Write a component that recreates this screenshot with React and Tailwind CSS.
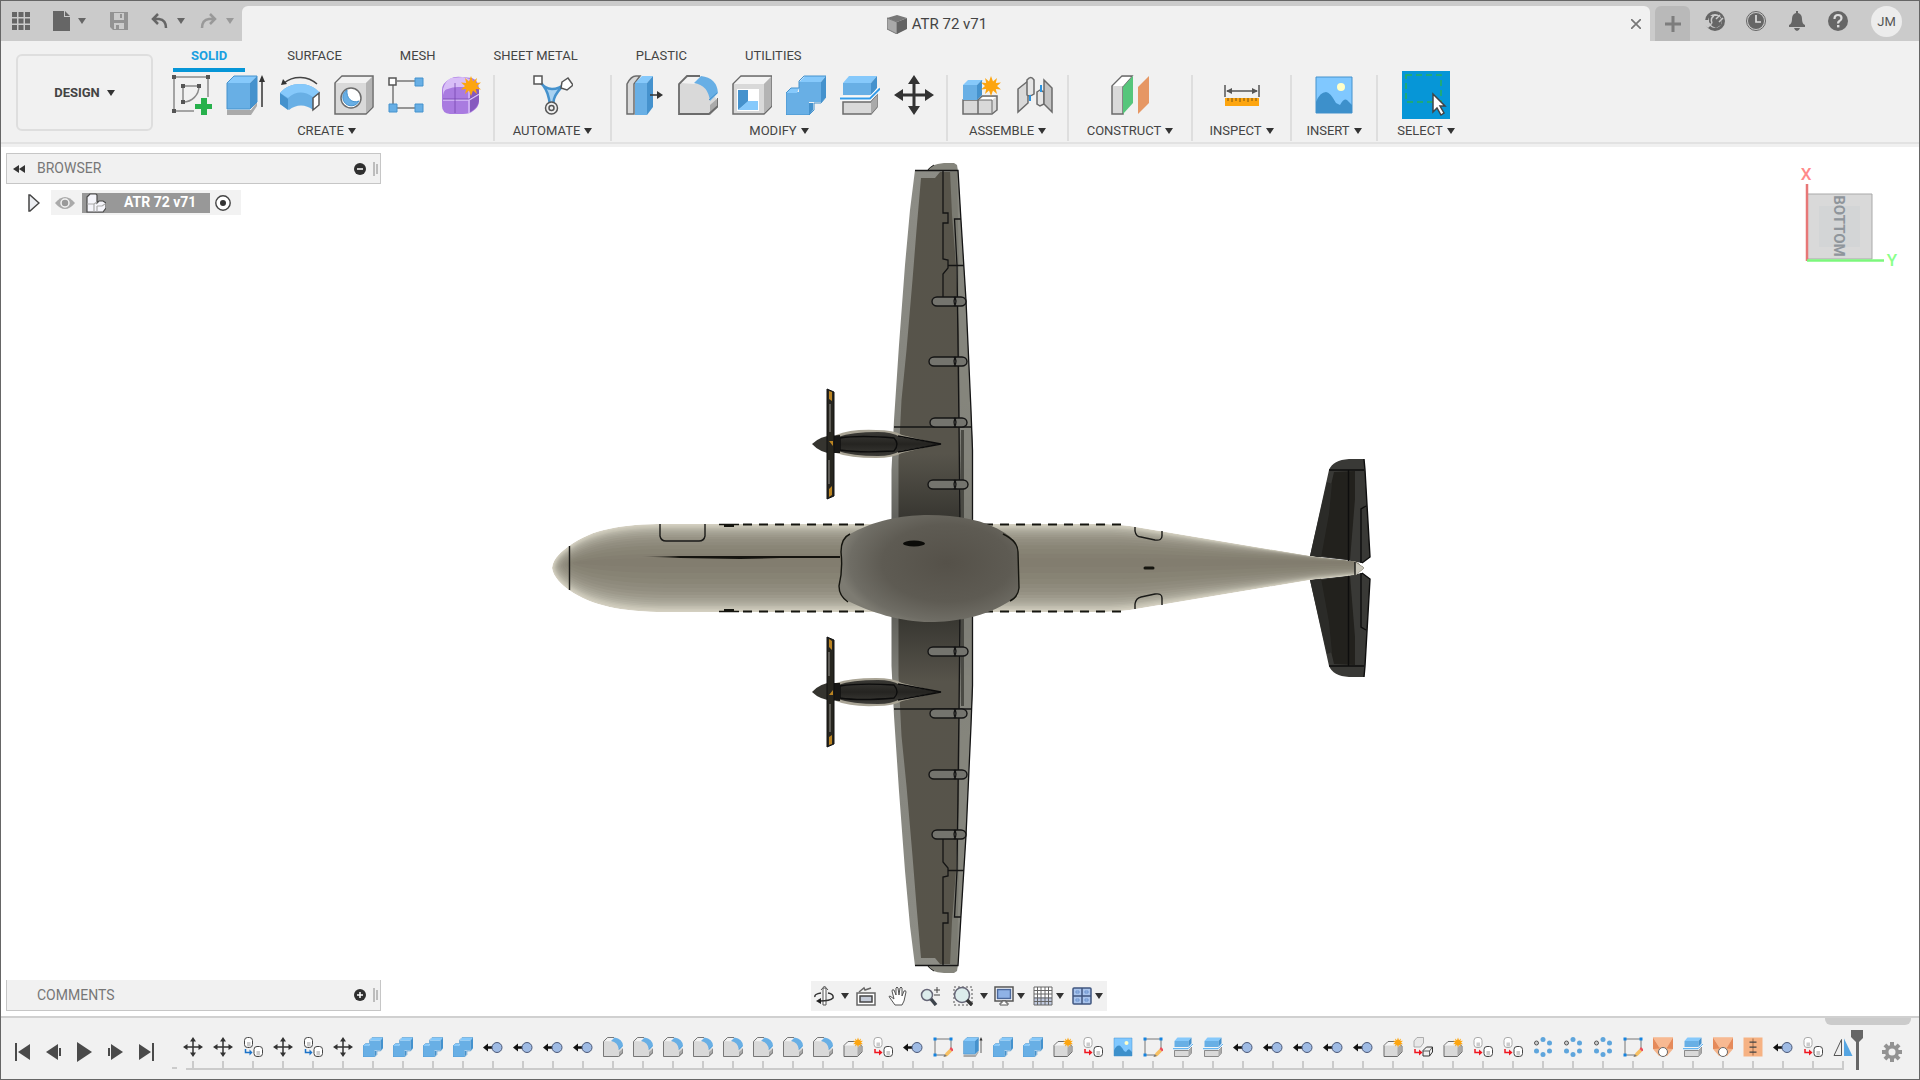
import { useState } from "react";

const BLUE = "#68afe5";
const BLUE_TOP = "#86c9fb";
const BLUE_SIDE = "#4592cd";
const GREY = "#d9d9d9";
const LINE = "#6b6b6b";

function Svg({ box = 40, size = "size-10", children }) {
  return (
    <svg viewBox={`0 0 ${box} ${box}`} className={`${size} shrink-0`} fill="none" aria-hidden="true">
      {children}
    </svg>
  );
}

function Caret({ className = "fill-[#333]" }) {
  return (
    <svg viewBox="0 0 8 6" className={`h-[6px] w-2 shrink-0 ${className}`} aria-hidden="true">
      <path d="M0 0h8L4 6z" />
    </svg>
  );
}

const STAR =
  "M0-10 2-4.6 6-8 4.8-3 10-3.6 6 0 10 3.6 4.8 3 6 8 2 4.6 0 10-2 4.6-6 8-4.8 3-10 3.6-6 0-10-3.6-4.8-3-6-8-2-4.6z";

/* ---------- 40px drawings, shared by the ribbon and the timeline ---------- */

const art = {
  sketch: (
    <>
      <path d="M2 2h34v20M2 2v34h20" stroke="#8a8a8a" strokeWidth="1.5" />
      <path d="M11 11h16c0 9-7 16-16 16z" stroke="#8a8a8a" strokeWidth="1.5" />
      <g fill="#555">
        <path d="M0 0h4v4H0zM34 0h4v4h-4zM0 34h4v4H0zM9 9h4v4H9zM25 9h4v4h-4zM9 25h4v4H9z" />
      </g>
      <path d="M29 23h6v6h6v5h-6v6h-6v-6h-6v-5h6z" fill="#27b14c" />
    </>
  ),
  extrude: (
    <>
      <path d="M1 35h24l6-8v4l-6 9H1z" fill="#aaa" />
      <path d="M1 8h23v26H1z" fill={BLUE} />
      <path d="M1 8 8 1h23l-7 7z" fill={BLUE_TOP} />
      <path d="m24 8 7-7v26l-7 7z" fill={BLUE_SIDE} />
      <path d="M1 8 8 1h23v26l-7 7H1z" stroke={BLUE_SIDE} />
      <path d="M36 6v26" stroke="#333" strokeWidth="1.5" />
      <path d="m36 0 3 7h-6z" fill="#333" />
    </>
  ),
  revolve: (
    <>
      <path d="M4 8C14 0 28 1 37 9" stroke="#444" strokeWidth="1.5" />
      <path d="M1 10 3 4l4 5z" fill="#333" />
      <path d="M0 18C10 6 30 6 40 18l-7 5v12c-7-6-17-6-24 0L0 29z" fill={BLUE} />
      <path d="M0 18C10 6 30 6 40 18l-7 4C24 16 16 16 8 23z" fill={BLUE_TOP} />
      <path d="m0 18 8 6v11l-8-6z" fill={BLUE_SIDE} />
      <path d="m33 23 6-5v12l-6 5z" fill="#fff" stroke="#555" strokeWidth="1.5" />
    </>
  ),
  hole: (
    <>
      <path d="M1 8 8 1h31v31l-7 7H1z" fill={GREY} stroke={LINE} strokeWidth="1.5" />
      <path d="m2 8 6-6h30l-6 6z" fill="#f2f2f2" />
      <path d="m32 8 6-6v30l-6 6z" fill="#b4b4b4" />
      <circle cx="17" cy="23" r="10" fill="#fff" stroke={LINE} strokeWidth="1.5" />
      <path d="M13 15a8.5 8.5 0 1 0 12 11c-7 3-13-3-12-11z" fill={BLUE} stroke={BLUE_SIDE} />
    </>
  ),
  pattern: (
    <>
      <path d="M9 6h18M5 10v19M9 33h18" stroke="#777" strokeWidth="1.5" />
      <path d="M1 3h7v7H1z" fill="#fff" stroke="#555" strokeWidth="1.5" />
      <path d="M27 3h8v8h-8zM1 29h8v8H1zM27 29h8v8h-8z" fill={BLUE} stroke={BLUE_SIDE} />
    </>
  ),
  form: (
    <>
      <path d="M8 4Q12 1 20 2l10 1q7 3 7 11v12q0 6-6 10-3 3-10 3H8q-8-1-8-8V15Q0 8 8 4z" fill="#a97be0" />
      <path d="M1 14Q3 6 9 3l12-1 10 3-7 7H9q-6 0-8 8z" fill="#d8bef7" />
      <path d="M28 13q8-3 9 1v12q-1 7-9 11z" fill="#8659bf" />
      <path d="M1 25h26l10-6M27 12v26M3 14q12-5 24-2" stroke="#d8bef7" strokeWidth="1.5" />
      <path d="M1 24h26l10-6M13 8v30" stroke="#7648b0" strokeWidth=".8" />
      <path d={STAR} transform="translate(29 11)" fill="#fda50f" />
    </>
  ),
  automate: (
    <>
      <path d="M6 6q6 8 13 8t13-5q-9 8-11 15l-1 6h-3l-1-6Q14 13 6 6z" fill="#a8d2f2" stroke={BLUE_SIDE} strokeWidth="2.5" />
      <path d="M1 1h8v8H1z" fill="#fff" stroke="#555" strokeWidth="1.5" />
      <path d="m29 7 6-4 5 7-6 5-6-2z" fill="#fff" stroke="#555" strokeWidth="1.5" />
      <circle cx="18.5" cy="33" r="6" fill="#eee" stroke="#555" strokeWidth="1.5" />
      <circle cx="18.5" cy="33" r="2.5" stroke="#555" strokeWidth="1.5" />
    </>
  ),
  press: (
    <>
      <path d="M3 9q4-8 9-8h4L10 9v30H3z" fill={GREY} stroke={LINE} strokeWidth="1.5" />
      <path d="M11 8h12v32H11z" fill={BLUE} />
      <path d="m11 8 7-7h11l-6 7z" fill={BLUE_TOP} />
      <path d="m23 8 6-7v31l-6 8z" fill={BLUE_SIDE} />
      <path d="M26 20h8" stroke="#333" strokeWidth="1.5" />
      <path d="m33 16 6 4-6 4z" fill="#333" />
    </>
  ),
  fillet: (
    <>
      <path d="M1 8 9 1h11l20 25v6l-8 8H1z" fill={GREY} />
      <path d="m2 8 8-6h13l-6 7z" fill="#f2f2f2" />
      <path d="m32 30 8-7v9l-8 8z" fill="#aaa" />
      <path d="M22 1H9L1 9v30h30l9-8v-8" stroke={LINE} strokeWidth="1.8" />
      <path d="m16 8 7-7q16 2 17 17l-8 8Q30 10 16 8z" fill={BLUE} />
      <path d="m31 25 8-7" stroke={BLUE_SIDE} />
    </>
  ),
  shell: (
    <>
      <path d="M1 9 9 1h31v30l-8 8H1z" fill={GREY} stroke={LINE} strokeWidth="1.5" />
      <path d="m2 9 7-7h30l-7 7z" fill="#f4f4f4" />
      <path d="m32 9 7-7v29l-7 7z" fill="#b4b4b4" />
      <path d="M5 14h22v22H5z" fill="#fff" />
      <path d="M6 15h10v12L6 35z" fill={BLUE_SIDE} />
      <path d="M16 26h10v9H6z" fill={BLUE_TOP} />
    </>
  ),
  combine: (
    <>
      <path d="M0 17h13V7h22v20H23v13H0z" fill={BLUE} />
      <path d="m0 18 5-5h8l-2 5zM13 7l6-6h21l-5 6z" fill={BLUE_TOP} />
      <path d="m35 7 5-6v21l-5 6zM23 28h4v7l-4 5z" fill={BLUE_SIDE} />
      <path d="m0 18 5-5h8V6l5-5h22v21l-5 6h-7v7l-5 5H0z" stroke={BLUE_SIDE} />
    </>
  ),
  split: (
    <>
      <path d="M3 27h28l6-7v12l-6 7H3z" fill={GREY} stroke={LINE} strokeWidth="1.5" />
      <path d="m31 27 6-7v12l-6 7z" fill="#aaa" />
      <path d="M3 8h28v12H3z" fill={BLUE} />
      <path d="m3 8 6-7h28l-6 7z" fill={BLUE_TOP} />
      <path d="m31 8 6-7v12l-6 8z" fill={BLUE_SIDE} />
      <path d="M0 23.500h30l10-10" stroke="#fff" strokeWidth="4" />
      <path d="M0 23.500h30l10-10" stroke="#349be8" strokeWidth="2" />
    </>
  ),
  move: (
    <>
      <path d="M20 6v28M6 20h28" stroke="#333" strokeWidth="3" />
      <path d="m20 0 6 9H14zM20 40l6-9H14zM0 20l9-6v12zM40 20l-9-6v12z" fill="#333" />
    </>
  ),
  component: (
    <>
      <path d="M2 25h15v14H2zM17 25l4-4h15v14l-5 4H17z" fill={GREY} stroke={LINE} strokeWidth="1.5" />
      <path d="m18 25 4-3h13l-4 3z" fill="#fff" />
      <path d="M31 25v13M17 25h14" stroke={LINE} />
      <path d="M2 10h14v15H2z" fill={BLUE} />
      <path d="m2 10 5-5h15l-6 5z" fill={BLUE_TOP} />
      <path d="m16 10 5-5v15l-5 5z" fill={BLUE_SIDE} />
      <path d={STAR} transform="translate(30 11)" fill="#fda50f" />
    </>
  ),
  joint: (
    <>
      <path d="M3 14 13 6v22L3 37z" fill={GREY} stroke={LINE} strokeWidth="1.5" />
      <path d="M12 5q4-5 7 0v14q-4 3-7 1z" fill="#e6e6e6" stroke={LINE} strokeWidth="1.5" />
      <path d="m22 17 3-2 4 2v12l-4 2-3-2z" fill="#e6e6e6" stroke={LINE} strokeWidth="1.5" />
      <path d="m29 5 8 8v24l-8-8z" fill="#c4c4c4" stroke={LINE} strokeWidth="1.5" />
      <path d="M15 20v6M26 10v7" stroke="#2b93e0" strokeWidth="2" />
    </>
  ),
  plane: (
    <>
      <path d="M2 11 12 1h10L13 12v27H2z" fill={GREY} stroke={LINE} strokeWidth="1.5" />
      <path d="m3 11 9-9h9l-8 9z" fill="#fff" />
      <path d="m13 12 10-11v27L13 39z" fill="#56c67b" />
      <path d="m28 12 11-11v27L28 39z" fill="#e69764" />
    </>
  ),
  measure: (
    <>
      <path d="M3 10v12M37 10v12M5 16h30" stroke="#555" strokeWidth="1.5" />
      <path d="m4 16 6-3v6zM36 16l-6-3v6z" fill="#555" />
      <path d="M3 23h34v8H3z" fill="#fda50f" />
      <path d="M6 23v3m4-3v4m4-4v3m4-3v4m4-4v3m4-3v4m4-4v3m4-3v3" stroke="#7a5410" />
    </>
  ),
  picture: (
    <>
      <path d="M2 2h36v36H2z" fill="#80c8ff" stroke={BLUE_SIDE} />
      <circle cx="27" cy="12" r="4" fill="#ffffc8" />
      <path d="M2 27q4-10 10-10 4 0 10 11l4 2q4-7 7-5l5 5v8H2z" fill="#3d90cb" />
    </>
  ),
  /* timeline only */
  link: (
    <>
      <rect x="3" y="1" width="16" height="20" rx="6" fill="#fff" stroke="#444" strokeWidth="2" />
      <rect x="22" y="19" width="17" height="20" rx="6" fill="#fff" stroke="#444" strokeWidth="2" />
      <path d="M8 10h7v9H8zM27 28h7v9h-7z" fill="#ccc" />
      <path d="M5 24v7h9" stroke="#1b72c8" strokeWidth="3" />
      <path d="m13 25 6 6-6 6z" fill="#1b72c8" />
    </>
  ),
  linkRed: (
    <>
      <rect x="2" y="1" width="16" height="20" rx="6" fill="#fff" stroke="#aaa" strokeWidth="2" />
      <rect x="22" y="19" width="17" height="20" rx="6" fill="#fff" stroke="#444" strokeWidth="2" />
      <path d="M7 11h7v8H7zM27 28h7v9h-7z" fill="#ccc" />
      <path d="M4 24v7h9" stroke="#f0141e" strokeWidth="3" />
      <path d="m12 25 7 6-7 6z" fill="#f0141e" />
    </>
  ),
  cubesRed: (
    <>
      <path d="m2 8 6-7h13v11l-6 8H2z" fill="#e8e8e8" stroke="#999" strokeWidth="1.5" />
      <path d="m20 27 7-7h12v10l-6 8H20z" fill="#eee" stroke="#333" strokeWidth="2" />
      <path d="M20 28h13v10M33 28l6-8" stroke="#333" strokeWidth="1.5" />
      <path d="M4 24v7h9" stroke="#f0141e" strokeWidth="3" />
      <path d="m12 25 7 6-7 6z" fill="#f0141e" />
    </>
  ),
  snap: (
    <>
      <path d="M6 21h15" stroke="#111" strokeWidth="5" />
      <path d="m0 21 10-8v16z" fill="#111" />
      <circle cx="28" cy="21" r="10" fill="#9fbbe4" stroke="#4a5878" strokeWidth="2" />
    </>
  ),
  newPart: (
    <>
      <path d="m2 17 8-8h14l14 9v12l-9 9H2z" fill={GREY} stroke={LINE} strokeWidth="2" />
      <path d="m3 17 8-7h15l-3 7z" fill="#f5f5f5" />
      <path d="m29 21 8-7v16l-8 8z" fill="#aaa" />
      <path d={STAR} transform="translate(30 11)" fill="#fda50f" />
    </>
  ),
  sketchEdit: (
    <>
      <path d="M4 4h32v32H4z" stroke="#777" strokeWidth="2" />
      <path d="M1 1h6v6H1zM33 1h6v6h-6zM1 33h6v6H1z" fill="#1583e0" />
      <path d="M22 24h18v16H22z" fill="#f1f1f1" />
      <path d="m22 40 3-8 8-8 5 5-9 9z" fill="#f7c062" />
      <path d="m33 24 3-4 5 5-3 4z" fill="#f0505a" />
      <path d="m21 40 2-6 5 4z" fill="#777" />
    </>
  ),
  ring: (
    <>
      <g fill="#5ea5dc">
        <circle cx="20" cy="5" r="5" />
        <circle cx="33" cy="12" r="5" />
        <circle cx="33" cy="28" r="5" />
        <circle cx="20" cy="35" r="5" />
        <circle cx="7" cy="28" r="5" />
      </g>
      <circle cx="7" cy="12" r="4" fill="#ccc" stroke="#555" strokeWidth="2" />
    </>
  ),
  loft: (
    <>
      <path d="M0 1h40v23L28 38H12L0 24z" fill="#f5b48a" />
      <path d="m0 1 14 22L0 24zM40 1 27 23l13 1z" fill="#e58a5b" />
      <path d="M0 1h40L28 20H12z" fill="#f7b992" />
      <circle cx="20" cy="30" r="9" fill="#fff" stroke="#666" strokeWidth="2" />
    </>
  ),
  rib: (
    <>
      <path d="M1 1h38v38H1z" fill="#f6b283" />
      <path d="M20 3v34" stroke="#a06b48" strokeWidth="2" />
      <path d="M13 10h14M13 20h14M13 30h14" stroke="#444" strokeWidth="2.5" />
    </>
  ),
  mirror: (
    <>
      <path d="M17 5v32H2z" fill="#eee" stroke="#555" strokeWidth="2" />
      <path d="M22 3v35h17z" fill="#55a5e2" />
    </>
  ),
};

/* ---------- title bar ---------- */

function TitleBar() {
  return (
    <header className="flex h-10 shrink-0 items-end bg-[#cbcbcb] pr-[17px]">
      <div className="flex h-10 w-[241px] shrink-0 items-center pl-[11px]">
        <button aria-label="Show data panel" className="mr-[23px]">
          <svg viewBox="0 0 18 18" className="size-[18px] fill-[#666]">
            <path d="M0 0h5v5H0zM6.5 0h5v5h-5zM13 0h5v5h-5zM0 6.5h5v5H0zM6.5 6.5h5v5h-5zM13 6.5h5v5h-5zM0 13h5v5H0zM6.5 13h5v5h-5zM13 13h5v5h-5z" />
          </svg>
        </button>
        <button aria-label="File" className="mr-6 flex items-center gap-2">
          <svg viewBox="0 0 17 20" className="h-5 w-[17px] fill-[#666]">
            <path d="M0 0h11v6h6v14H0zM12 0l5 5h-5z" />
          </svg>
          <Caret className="fill-[#666]" />
        </button>
        <button aria-label="Save" className="mr-[23px]">
          <svg viewBox="0 0 18 18" className="size-[18px]">
            <path d="M0 0h18v18H3l-3-3z" fill="#939393" />
            <path d="M4 1h10v7H4zM4 11h10v6H4z" fill="#cbcbcb" />
            <path d="M10 2h2v4h-2zM6 13h3v4H6z" fill="#939393" />
          </svg>
        </button>
        <button aria-label="Undo" className="mr-[15px] flex items-center gap-2">
          <svg viewBox="0 0 18 16" className="h-4 w-[18px]" fill="none" stroke="#666" strokeWidth="2.5">
            <path d="M7 1 2 6l5 5M2 6h6q7 1 7 9" />
          </svg>
          <Caret className="fill-[#666]" />
        </button>
        <button aria-label="Redo" className="flex items-center gap-2">
          <svg viewBox="0 0 18 16" className="h-4 w-[18px]" fill="none" stroke="#999" strokeWidth="2.5">
            <path d="m10 1 5 5-5 5M15 6H9Q2 7 2 15" />
          </svg>
          <Caret className="fill-[#999]" />
        </button>
      </div>

      <div className="flex h-[35px] flex-1 items-center rounded-t-md bg-[#f1f1f1] pr-[6px]">
        <div className="flex flex-1 items-center justify-center gap-[5px] pt-[2px] pl-1 text-[15px] text-[#444]">
          <svg viewBox="0 0 20 19" className="h-[19px] w-5">
            <path d="m0 3 10-3 10 3-10 4z" fill="#777" />
            <path d="m0 3 10 4v12L0 14z" fill="#a9a9a9" stroke="#777" />
            <path d="m10 7 10-4v11l-10 5z" fill="#636363" />
          </svg>
          ATR 72 v71
        </div>
        <button aria-label="Close tab" className="p-[3px]">
          <svg viewBox="0 0 10 10" className="size-[10px]" stroke="#777" strokeWidth="1.7">
            <path d="m0 0 10 10M10 0 0 10" />
          </svg>
        </button>
      </div>

      <button aria-label="New design" className="ml-[5px] flex h-[35px] w-[35px] items-center justify-center rounded-t-md bg-[#b9b9b9]">
        <svg viewBox="0 0 16 16" className="size-4" stroke="#7d7d7d" strokeWidth="3">
          <path d="M8 0v16M0 8h16" />
        </svg>
      </button>

      <div className="flex h-10 items-center gap-[21px] pl-[15px]">
        <button aria-label="Extensions">
          <svg viewBox="0 0 20 20" className="size-5">
            <circle cx="10" cy="10" r="8.5" fill="none" stroke="#666" strokeWidth="3" />
            <path d="M0 9h4l2 4-3 4-3-3z" fill="#cbcbcb" />
            <path d="M4 5h10l3 4-1 5-5 3-4-2-3-4z" fill="#666" />
            <path d="M3 16l4-4M7 12q-2-5 2-7" stroke="#cbcbcb" strokeWidth="1.5" fill="none" />
            <path d="m11 8 4-4M14 11l4-4" stroke="#cbcbcb" strokeWidth="1.5" />
          </svg>
        </button>
        <button aria-label="Job status">
          <svg viewBox="0 0 20 20" className="size-5">
            <circle cx="10" cy="10" r="9.5" fill="#cbcbcb" stroke="#666" />
            <circle cx="10" cy="10" r="8" fill="#666" />
            <path d="M10 4v7h5" stroke="#ddd" strokeWidth="1.7" fill="none" />
          </svg>
        </button>
        <button aria-label="Notifications">
          <svg viewBox="0 0 20 20" className="size-5 fill-[#666]">
            <path d="M9 0h2v2q4 1 4 6 0 5 3 6v2H2v-2q3-1 3-6 0-5 4-6zM7 17h6q-1 3-3 3t-3-3z" />
          </svg>
        </button>
        <button aria-label="Help">
          <svg viewBox="0 0 20 20" className="size-5">
            <circle cx="10" cy="10" r="10" fill="#666" />
            <path d="M6.5 8q0-4 3.5-4t3.5 3q0 2-2 3-1.5 1-1.5 2.5" stroke="#ddd" strokeWidth="2.2" fill="none" />
            <path d="M9 14h2.4v2.4H9z" fill="#ddd" />
          </svg>
        </button>
      </div>
      <button className="mb-1 ml-[23px] flex size-[31px] items-center justify-center rounded-full bg-[#ececec] text-[13px] text-[#555]">
        JM
      </button>
    </header>
  );
}

/* ---------- ribbon ---------- */

const tabs = ["SOLID", "SURFACE", "MESH", "SHEET METAL", "PLASTIC", "UTILITIES"];

const groups = [
  { label: "CREATE", width: "w-[335px]", icons: ["sketch", "extrude", "revolve", "hole", "pattern", "form"] },
  { label: "AUTOMATE", width: "w-[117px]", icons: ["automate"] },
  { label: "MODIFY", width: "w-[336px]", icons: ["press", "fillet", "shell", "combine", "split", "move"] },
  { label: "ASSEMBLE", width: "w-[121px]", icons: ["component", "joint"] },
  { label: "CONSTRUCT", width: "w-[124px]", icons: ["plane"] },
  { label: "INSPECT", width: "w-[99px]", icons: ["measure"] },
  { label: "INSERT", width: "w-[86px]", icons: ["picture"] },
];

function GroupLabel({ children }) {
  return (
    <button className="flex h-5 items-center gap-1 text-[13px] text-[#444]">
      {children}
      <Caret />
    </button>
  );
}

function Ribbon() {
  const [active, setActive] = useState("SOLID");

  return (
    <div className="shrink-0 border-b-[3px] border-[#f0f0f0] bg-[#f1f1f1]">
      <div className="flex h-[103px] border-b-2 border-[#e2e2e2]">
        <button className="mt-[13px] ml-[15px] flex h-[77px] w-[137px] shrink-0 items-center justify-center gap-[7px] rounded-md border-2 border-[#dedede] text-[13px] font-bold text-[#444]">
          DESIGN
          <Caret />
        </button>
        <div className="ml-[7px] flex-1">
          <nav className="ml-[13px] flex gap-[26px]">
            {tabs.map((tab) => (
              <button
                key={tab}
                onClick={() => setActive(tab)}
                className={
                  tab === active
                    ? "h-[31px] border-b-4 border-[#0696d7] px-[18px] pt-[2px] text-[13px] font-bold text-[#1a9fe0]"
                    : "h-[31px] border-b-4 border-transparent px-4 pt-[2px] text-[13px] text-[#444]"
                }
              >
                {tab}
              </button>
            ))}
          </nav>
          <div className="flex pt-[3px]">
            {groups.map((g) => (
              <section key={g.label} className={`${g.width} flex h-[66px] shrink-0 flex-col items-center justify-between border-r-2 border-[#dedede]`}>
                <div className="flex gap-[14px]">
                  {g.icons.map((name) => (
                    <button key={name} aria-label={name}>
                      <Svg>{art[name]}</Svg>
                    </button>
                  ))}
                </div>
                <GroupLabel>{g.label}</GroupLabel>
              </section>
            ))}
            <section className="flex h-[66px] w-24 shrink-0 flex-col items-center justify-between">
              <button aria-label="select" className="-mt-1 bg-[#0696d7]">
                <svg viewBox="0 0 48 48" className="size-12" fill="none">
                  <path d="M4 4h35v27H4z" stroke="#27b05c" strokeWidth="1.5" strokeDasharray="6 4" />
                  <path d="M31 23v18l4-4 4 7 3-2-4-7h5z" fill="#fff" stroke="#444" strokeWidth="1.5" />
                </svg>
              </button>
              <GroupLabel>SELECT</GroupLabel>
            </section>
          </div>
        </div>
      </div>
    </div>
  );
}

/* ---------- aircraft model ---------- */

const FUSELAGE =
  "M552 568C553 558 562 551 569 546C592 529 622 524 665 524L1105 524Q1125 525 1136 527L1310 556L1356 562L1364 568L1356 575L1310 580L1136 609Q1125 611 1105 612L665 612C622 612 592 606 569 590C562 585 553 577 552 568Z";

// shading bands from the rim of the hull to its centre line
const bands = [
  [1, "#d3cfc0"],
  [0.97, "#cdc9ba"],
  [0.94, "#c6c3b4"],
  [0.91, "#bfbcad"],
  [0.88, "#b7b4a6"],
  [0.85, "#b0ad9f"],
  [0.81, "#a9a698"],
  [0.77, "#a3a092"],
  [0.72, "#9d998b"],
  [0.66, "#979385"],
  [0.6, "#928e80"],
  [0.52, "#8e8a7c"],
  [0.44, "#8a8677"],
  [0.34, "#878374"],
  [0.22, "#847f71"],
  [0.1, "#827d6f"],
];

function Pod({ x, y, w }) {
  return (
    <g stroke="#141414" strokeWidth="1.4" fill="#74746e">
      <rect x={x} y={y} width={w} height="9" rx="5" />
      <path d={`M954 ${y}q4 4.5 0 9M956 ${y}q-4 4.5 0 9`} fill="none" />
    </g>
  );
}

function Wing() {
  return (
    <g>
      <path d="M927 171q3-7 17-8l10 0 3 2 1 6z" fill="#85857c" />
      <path d="M927 171q3-4 7-6" stroke="#222" fill="none" />
      <path d="M915 170h43l3 50 5 80 5 110 2 40 0 75h-81.5v-55l2.5-50 5-75 6-80 5-55z" fill="url(#edge)" />
      <path d="M921 178h14l5-6h17l2 100 1 253h-61.5v-65l3-60 5-50 6-70 4-50z" fill="url(#wing)" />
      <path d="M950 171h8l3 50 5 80 4 100 3 50v74h-10l-1-80-3-110-3-70-4-50z" fill="#84847c" opacity=".8" />
      <path d="M961 430h3v95h-4z" fill="#4a4a44" />
      <g stroke="#141414" strokeWidth="1.3" fill="none">
        <path d="M915 170.5h43l3 50 5 80 5 110 1.5 40v74" />
        <path d="M943 171v42h5v10h-5v36l5 1v8l-5 6v23M948 265.5h16M957 265l2 160 1 100" />
        <path d="M961 219h-6.5l2.5 46M894 427h78" />
      </g>
      <Pod x="932" y="297" w="34" />
      <Pod x="929" y="357" w="38" />
      <Pod x="930" y="418" w="37" />
      <Pod x="928" y="480" w="40" />
      {/* nacelle */}
      <path d="M836 435q14-6 40-5 18 0 26 5l37 9-37 9q-9 5-26 5-26 0-40-5z" fill="#a9a495" />
      <path d="M838 437q14-5 40-5 14 0 22 5l41 7-41 7q-8 5-22 5-26 0-40-5z" fill="url(#nacelle)" />
      <path d="M840 438q20-3 54 0 6 6 0 13-34 2-54-1zM898 436l43 8-43 8" stroke="#0c0c0c" strokeWidth="1.3" fill="none" />
      <path d="M812 444q8-8 22-9v19q-14-1-22-10z" fill="#35342f" />
      <path d="M828 436l12-1v18h-12z" fill="#171716" />
      {/* propeller */}
      <path d="M827 389l7 3v104l-7 3z" fill="#26251f" stroke="#111" />
      <path d="M830 404v28M829 460v24" stroke="#5f5d57" strokeWidth="2" />
      <path d="M829 391l3 1v9l-3-2zM829 497l3-2v-9l-3 3zM829 441l4 5v-5z" fill="#bb8422" />
    </g>
  );
}

function Tailplane() {
  return (
    <g>
      <path d="M1310 556l19-86q4-10 20-11l15 0 1 11 5 87-8 6-16-3z" fill="#393936" />
      <path d="M1320 556l5-45 9-39 21-1v28l-5 61z" fill="#22211d" />
      <path d="M1310 556l17-74 5 2-3 30-8 44z" fill="#2b2b28" />
      <g stroke="#0d0d0d" strokeWidth="1.4" fill="none">
        <path d="M1329 470h35M1348.5 470v92M1366 506l-5 3 0 54M1364 459l1 11 5 87-8 6" />
      </g>
    </g>
  );
}

function Aircraft() {
  return (
    <svg viewBox="1 147 1918 869" className="absolute inset-0 h-full w-full" role="img" aria-label="Aircraft, bottom view">
      <defs>
        <linearGradient id="wing" x1="0" x2="0" y1="170" y2="525" gradientUnits="userSpaceOnUse">
          <stop offset="0" stopColor="#57544a" />
          <stop offset=".8" stopColor="#57544b" />
          <stop offset="1" stopColor="#34332e" />
        </linearGradient>
        <linearGradient id="edge" x1="0" x2="0" y1="170" y2="525" gradientUnits="userSpaceOnUse">
          <stop offset="0" stopColor="#8d8d86" />
          <stop offset=".8" stopColor="#83837c" />
          <stop offset="1" stopColor="#5e5e59" />
        </linearGradient>
        <linearGradient id="nacelle" x1="0" x2="0" y1="0" y2="1">
          <stop offset="0" stopColor="#3c3b37" />
          <stop offset=".5" stopColor="#252421" />
          <stop offset="1" stopColor="#3a3935" />
        </linearGradient>
        <radialGradient id="belly" cx=".6" cy=".45" r=".6">
          <stop offset="0" stopColor="#555149" />
          <stop offset=".6" stopColor="#5e5b53" />
          <stop offset=".9" stopColor="#6f6d65" />
          <stop offset="1" stopColor="#7d7b72" />
        </radialGradient>
        <linearGradient id="spear" x1="640" x2="840" y1="0" y2="0" gradientUnits="userSpaceOnUse">
          <stop offset="0" stopColor="#15140f" stopOpacity="0" />
          <stop offset=".2" stopColor="#15140f" />
          <stop offset="1" stopColor="#15140f" />
        </linearGradient>
        <clipPath id="hull">
          <path d={FUSELAGE} />
        </clipPath>
      </defs>

      <Wing />
      <Tailplane />
      <g transform="translate(0 1136) scale(1 -1)">
        <Wing />
        <Tailplane />
      </g>

      <g clipPath="url(#hull)">
        {bands.map(([t, fill]) => (
          <path key={t} d={FUSELAGE} fill={fill} transform={`translate(${(1 - t) * 26} ${568 - 568 * t - (1 - t) * 6}) scale(1 ${t})`} />
        ))}
      </g>
      <path d="M1355 562l9 6-9 7z" fill="#c9c6ba" />
      <g stroke="#1a1a18" strokeWidth="1.4" fill="none">
        <path d="M569.5 546v44M1355 562v13" />
        <path d="M660 524v12q1 5 6 5h33q5 0 6-5v-12" />
        <path d="M1135 527v4q1 6 6 6l14 3q7 1 7-4v-5M1135 609v-5q1-6 6-7l14-3q7-1 7 4v7" />
      </g>
      <g stroke="#15150f" strokeWidth="2" strokeDasharray="9 7">
        <path d="M743 524.5h124M984 524.5h138M743 611.5h124M984 611.5h138" />
      </g>
      <path d="M719 524.5h20M719 611.5h20" stroke="#15150f" strokeWidth="1.5" />
      <path d="M724 525.5h10M724 610.5h10" stroke="#15150f" strokeWidth="3" />
      <path d="M640 556.5l40-.5h160v2h-60l-40 1-60-1z" fill="url(#spear)" />
      <path d="M1145 568h8" stroke="#15150f" strokeWidth="3" strokeLinecap="round" />

      <path
        d="M841 546Q842 537 852 533C880 518 908 515 928 515C958 515 985 520 1005 533Q1018 541 1018 552L1019 588Q1018 597 1010 601C985 617 955 622 930 622C900 622 870 612 848 601Q839 596 839 586Q843 570 841 552Z"
        fill="url(#belly)"
      />
      <path
        d="M850 534Q841 538 841 552Q843 570 839 586Q839 596 848 602M1003 534Q1018 541 1018 552L1019 588Q1018 597 1010 601"
        stroke="#15150f"
        strokeWidth="1.4"
        fill="none"
      />
      <ellipse cx="914" cy="543.5" rx="11" ry="3" fill="#0b0b08" />
    </svg>
  );
}

/* ---------- canvas overlays ---------- */

function PanelEnd({ plus }) {
  return (
    <>
      <button aria-label={plus ? "Add comment" : "Hide panel"} className="mr-[7px]">
        <svg viewBox="0 0 12 12" className="size-3">
          <circle cx="6" cy="6" r="6" fill="#2f2f2f" />
          <path d={plus ? "M3 6h6M6 3v6" : "M3 6h6"} stroke="#fff" strokeWidth="1.5" />
        </svg>
      </button>
      <svg viewBox="0 0 5 14" className="h-[14px] w-[5px]" stroke="#888">
        <path d="M1 0v14M4 2v10" />
      </svg>
    </>
  );
}

function BrowserPanel() {
  return (
    <div className="w-[375px]">
      <div className="flex h-[31px] items-center border border-[#c6c6c6] bg-[#f1f1f1] pr-[2px] pl-[6px]">
        <button aria-label="Collapse browser">
          <svg viewBox="0 0 12 8" className="h-2 w-3 fill-[#333]">
            <path d="M6 0v8L0 4zM12 0v8L6 4z" />
          </svg>
        </button>
        <span className="ml-3 flex-1 text-[14px] text-[#777]">BROWSER</span>
        <PanelEnd plus={false} />
      </div>
      <div className="mt-[6px] flex h-[25px] items-center pl-[22px]">
        <button aria-label="Expand">
          <svg viewBox="0 0 12 18" className="h-[18px] w-3" fill="#eceef2" stroke="#444" strokeWidth="1.5">
            <path d="M1 1v16h1l9-8L2 1z" />
          </svg>
        </button>
        <div className="ml-[11px] flex h-[25px] w-[190px] items-center bg-[#f2f2f2] pl-1">
          <button aria-label="Toggle visibility">
            <svg viewBox="0 0 20 12" className="h-3 w-5">
              <path d="M0 6q10-12 20 0-10 12-20 0z" fill="#aaa" />
              <circle cx="10" cy="6" r="4" fill="#999" stroke="#f2f2f2" strokeWidth="1.5" />
            </svg>
          </button>
          <div className="ml-[7px] flex h-5 w-32 items-center bg-[#989898] pl-1 text-[14px] font-bold text-white">
            <svg viewBox="0 0 20 20" className="mr-[18px] size-5" strokeWidth="1.2">
              <path d="m1 4 3-3h6l1 1v8l2-2h4l3 2v5l-3 4H1z" fill="#f4f4fa" stroke="#4a4a4a" />
              <path d="M1 11h7v8M8 11l3-2M11 13h5l3-2M11 13v6" fill="none" stroke="#aaa" />
            </svg>
            ATR 72 v71
          </div>
          <button aria-label="Activate component" className="ml-[5px]">
            <svg viewBox="0 0 16 16" className="size-4">
              <circle cx="8" cy="8" r="7.2" fill="#fff" stroke="#444" strokeWidth="1.4" />
              <circle cx="8" cy="8" r="3" fill="#333" />
            </svg>
          </button>
        </div>
      </div>
    </div>
  );
}

function ViewCube() {
  return (
    <svg viewBox="0 0 110 110" className="size-[110px]" fontFamily="Roboto, sans-serif" textAnchor="middle">
      <path d="M12 29h65v65H12z" fill="#d9d9d9" stroke="#a9a9a9" />
      <path d="M24 41h41v41H24z" fill="#d3d5d6" />
      <text transform="translate(39 61) rotate(90)" fontSize="15" fontWeight="700" fill="#8f959b">
        BOTTOM
      </text>
      <path d="M12 19v77" stroke="#e77777" strokeWidth="2.5" />
      <path d="M12 95.5h77" stroke="#7cf77c" strokeWidth="2.5" />
      <text x="11" y="15" fontSize="17" fontWeight="500" fill="#ff8a8a">X</text>
      <text x="97" y="101" fontSize="17" fontWeight="500" fill="#8aff8a">Y</text>
    </svg>
  );
}

const navItems = [
  {
    name: "Orbit",
    caret: "ml-[7px]",
    space: "mr-[7px]",
    draw: (
      <>
        <path d="M9 2h3v17H9zM7 4l3.5-4L14 4" fill="#fff" stroke="#555" />
        <path d="M14 7q6 1 5 5-3 3-13 3M7 7q-7 1-6 4" stroke="#333" strokeWidth="1.5" />
        <path d="m2 15 5-3v6z" fill="#222" />
      </>
    ),
  },
  {
    name: "Look at",
    space: "mr-3",
    draw: (
      <>
        <path d="M1 7h18v12H1z" fill="#fff" stroke="#666" strokeWidth="1.5" />
        <path d="M4 10h12v6H4z" fill="#c4cbd8" stroke="#444" strokeWidth="1.5" />
        <path d="m3 6 5-4 1 2 6-2" stroke="#666" strokeWidth="1.5" />
      </>
    ),
  },
  {
    name: "Pan",
    space: "mr-3",
    draw: (
      <path
        d="M7 19 2 12q-2-2 0-2l4 3-2-8q0-2 2-1l2 5V2q1-2 2 0l1 7 1-7q1-2 2 0v8l2-5q2-1 2 1l-2 9-2 4z"
        fill="#fff"
        stroke="#555"
      />
    ),
  },
  {
    name: "Zoom",
    space: "mr-[13px]",
    draw: (
      <>
        <circle cx="7" cy="9" r="5.5" fill="#dcecec" stroke="#667" strokeWidth="1.5" />
        <path d="m11 13 5 6" stroke="#3d444c" strokeWidth="3.5" />
        <path d="M14 4h6M17 1v6M14 9h6" stroke="#444" />
      </>
    ),
  },
  {
    name: "Fit",
    caret: "ml-[7px]",
    space: "mr-[6px]",
    draw: (
      <>
        <path d="M1 1h18v18H1z" stroke="#555" strokeDasharray="2 2" />
        <circle cx="9" cy="9" r="7.5" fill="#dcecec" stroke="#667" strokeWidth="1.5" />
        <path d="m14 14 5 5" stroke="#333" strokeWidth="3.5" />
      </>
    ),
  },
  {
    name: "Display settings",
    caret: "ml-[3px]",
    space: "mr-2",
    draw: (
      <>
        <path d="M1 1h18v14H1z" fill="#fff" stroke="#555" strokeWidth="1.5" />
        <path d="M3.5 3.5h13v9h-13z" fill="#8fb2e6" stroke="#4b689c" strokeWidth="1.5" />
        <path d="M8 15v2H6v2h8v-2h-2v-2z" fill="#fff" stroke="#555" />
      </>
    ),
  },
  {
    name: "Grid and snaps",
    caret: "ml-[3px]",
    space: "mr-2",
    draw: (
      <>
        <path d="M1 1h18v18H1z" fill="#fff" />
        <path d="M1 11h18v8H1z" fill="#c2cbe0" />
        <path d="M1 1h18v18H1zM4.5 1v18M8 1v18M12 1v18M15.5 1v18M1 4.5h18M1 8h18M1 12h18M1 15.5h18" stroke="#666" />
      </>
    ),
  },
  {
    name: "Viewports",
    caret: "ml-[3px]",
    space: "mr-0",
    draw: (
      <>
        <rect x="1" y="2" width="18" height="16" rx="1" fill="#a9c4ec" stroke="#40567f" strokeWidth="1.5" />
        <path d="M10 2v16M1 10h18" stroke="#40567f" strokeWidth="1.5" />
        <path d="M4 5h3v2H4zM13 5h3v2h-3zM4 13h3v2H4zM13 13h3v2h-3z" stroke="#6d94cf" />
      </>
    ),
  },
];

function NavBar() {
  return (
    <div className="flex h-[30px] w-[296px] items-center bg-[#f1f1f1] pl-[3px]">
      {navItems.map((item) => (
        <button key={item.name} aria-label={item.name} className={`flex items-center ${item.space}`}>
          <Svg box={20} size="size-5">{item.draw}</Svg>
          {item.caret && (
            <span className={item.caret}>
              <Caret />
            </span>
          )}
        </button>
      ))}
    </div>
  );
}

/* ---------- timeline ---------- */

const many = (name, n) => Array(n).fill(name);

const features = [
  "move", "move", "link", "move", "link", "move",
  ...many("combine", 4),
  ...many("snap", 4),
  ...many("fillet", 8),
  "newPart", "linkRed", "snap", "sketchEdit", "extrude",
  "combine", "combine", "newPart", "linkRed", "picture", "sketchEdit",
  "split", "split",
  ...many("snap", 5),
  "newPart", "cubesRed", "newPart", "linkRed", "linkRed",
  "ring", "ring", "ring", "sketchEdit",
  "loft", "split", "loft", "rib", "snap", "linkRed", "mirror",
];

const playback = [
  { name: "Go to start", d: "M1 1h2v18H1zM16 2v16L4 10z" },
  { name: "Step back", d: "M13 2v16L1 10zM14 6h2v8h-2z" },
  { name: "Play", d: "M1 0v20l15-10z" },
  { name: "Step forward", d: "M4 2v16l12-8zM1 6h2v8H1z" },
  { name: "Go to end", d: "M14 1h2v18h-2zM1 2v16l12-8z" },
];

function Timeline() {
  return (
    <footer className="flex h-[63px] shrink-0 border-t-2 border-[#d0d0d0] bg-[#f1f1f1]">
      <div className="mt-[24px] ml-[13px] flex shrink-0 gap-[14px]">
        {playback.map((b) => (
          <button key={b.name} aria-label={b.name} className="h-5">
            <svg viewBox="0 0 17 20" className="h-5 w-[17px] fill-[#4a4a4a]">
              <path d={b.d} />
            </svg>
          </button>
        ))}
      </div>
      <div className="mt-[49px] ml-[17px] h-[2px] w-[5px] shrink-0 bg-[#cbcbcb]" />
      <ol className="mt-[19px] ml-px flex shrink-0">
        {features.map((name, i) => (
          <li key={i} className="flex w-[30px] flex-col items-center">
            <button aria-label={`${name} ${i + 1}`}>
              <Svg size="size-5">{art[name]}</Svg>
            </button>
            <span className="mt-1 h-[7px] w-[2px] bg-[#cbcbcb]" />
            <span
              className={
                i === 0
                  ? "h-[2px] w-[22px] self-end bg-[#cbcbcb]"
                  : i === features.length - 1
                  ? "h-[2px] w-4 self-start bg-[#cbcbcb]"
                  : "h-[2px] w-full bg-[#cbcbcb]"
              }
            />
          </li>
        ))}
      </ol>
      <svg viewBox="0 0 12 40" className="-ml-[7px] mt-3 h-10 w-3 shrink-0 fill-[#666]">
        <path d="M0 0h12v8l-4 4v28H5V12L0 7z" />
      </svg>
      <div className="flex min-w-0 flex-1 flex-col items-end">
        <div className="mr-2 h-[7px] w-[86px] shrink-0 rounded-b-md bg-[#cbcbcb]" />
        <button aria-label="Timeline settings" className="mt-[17px] mr-[17px]">
          <svg viewBox="-10 -10 20 20" className="size-5">
            <g fill="#939393">
              <circle r="7" />
              {[0, 45, 90, 135].map((a) => (
                <rect key={a} x="-2" y="-10" width="4" height="20" transform={`rotate(${a})`} />
              ))}
            </g>
            <circle r="3.5" fill="#f1f1f1" />
          </svg>
        </button>
      </div>
    </footer>
  );
}

export default function App() {
  return (
    <div className="flex h-screen min-h-[640px] flex-col overflow-hidden border border-[#666] bg-[#f1f1f1] font-['Roboto',sans-serif]">
      <TitleBar />
      <Ribbon />
      <main className="relative flex flex-1 flex-col bg-white">
        <Aircraft />
        <div className="relative flex flex-1 flex-col justify-between pb-[5px] pl-[5px]">
          <div className="flex items-start justify-between pt-[6px] pr-[14px]">
            <BrowserPanel />
            <div className="mt-3">
              <ViewCube />
            </div>
          </div>
          <div className="grid grid-cols-[1fr_auto_1fr] items-end pr-2">
            <div className="flex h-[31px] w-[375px] items-center border border-t-0 border-[#c6c6c6] bg-[#f1f1f1] pr-[2px] pl-[30px]">
              <span className="flex-1 text-[14px] text-[#777]">COMMENTS</span>
              <PanelEnd plus />
            </div>
            <NavBar />
          </div>
        </div>
      </main>
      <Timeline />
    </div>
  );
}
